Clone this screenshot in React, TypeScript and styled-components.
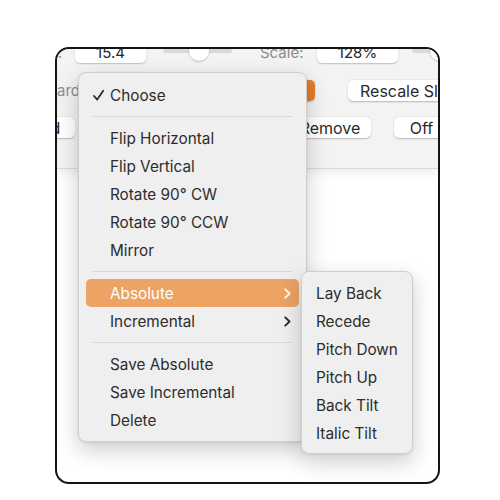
import React from "react";
import styled, { createGlobalStyle } from "styled-components";

const Global = createGlobalStyle`
  html, body { margin: 0; padding: 0; background: #ffffff; }
  body { font-family: Inter, "Noto Sans", "Liberation Sans", sans-serif; }
`;

const Page = styled.div`
  width: 500px;
  height: 500px;
  box-sizing: border-box;
  padding: 47px 0 0 55px;
  background: #ffffff;
`;

const Frame = styled.div`
  position: relative;
  width: 385px;
  height: 437px;
  box-sizing: border-box;
  border: 2px solid #141414;
  border-radius: 14px;
  overflow: hidden;
  background: #ffffff;
`;

const Toolbar = styled.div`
  display: flex;
  flex-direction: column;
  gap: 16px;
  height: 120px;
  box-sizing: border-box;
  background: #f3f3f3;
  border-bottom: 1px solid #dadada;
  box-shadow: 0 2px 12px rgba(0, 0, 0, 0.09);
  overflow: hidden;
`;

const Row = styled.div<{ $top?: number; $left: number; $h?: number }>`
  display: flex;
  align-items: center;
  height: ${(p) => p.$h ?? 21}px;
  margin-top: ${(p) => p.$top ?? 0}px;
  margin-left: ${(p) => p.$left}px;
  flex-shrink: 0;
  white-space: nowrap;
`;

const Label = styled.span<{ $w: number; $mr: number }>`
  width: ${(p) => p.$w}px;
  margin-right: ${(p) => p.$mr}px;
  flex-shrink: 0;
  text-align: right;
  font-size: 15px;
  color: #8c8c8c;
`;

const Field = styled.div<{ $w: number; $mr: number }>`
  width: ${(p) => p.$w}px;
  height: 22px;
  margin-right: ${(p) => p.$mr}px;
  flex-shrink: 0;
  box-sizing: border-box;
  background: #ffffff;
  border-radius: 5px;
  box-shadow: 0 0.5px 1.5px rgba(0, 0, 0, 0.22);
  display: flex;
  align-items: center;
  justify-content: center;
  font-size: 15px;
  color: #262626;
`;

const Slider = styled.div<{ $w: number; $mr: number; $knob: number }>`
  position: relative;
  width: ${(p) => p.$w}px;
  height: 4px;
  margin-right: ${(p) => p.$mr}px;
  margin-top: -3px;
  flex-shrink: 0;
  border-radius: 2px;
  background: #d9d9d9;
  &::after {
    content: "";
    position: absolute;
    left: ${(p) => p.$knob}px;
    top: -8px;
    width: 20px;
    height: 20px;
    border-radius: 50%;
    background: #ffffff;
    box-shadow: 0 0.5px 2px rgba(0, 0, 0, 0.3);
  }
`;

const Button = styled.div<{ $w?: number; $mr: number }>`
  ${(p) => (p.$w ? `width: ${p.$w}px;` : "padding: 0 12px;")}
  height: 21px;
  margin-right: ${(p) => p.$mr}px;
  flex-shrink: 0;
  box-sizing: border-box;
  background: #ffffff;
  border-radius: 5px;
  box-shadow: 0 0.5px 1.5px rgba(0, 0, 0, 0.25);
  display: flex;
  align-items: center;
  justify-content: center;
  font-size: 16px;
  color: #2a2a2a;
`;

const PopUp = styled.div<{ $w: number; $mr: number }>`
  width: ${(p) => p.$w}px;
  height: 21px;
  margin-right: ${(p) => p.$mr}px;
  flex-shrink: 0;
  display: flex;
  justify-content: flex-end;
  background: #ffffff;
  border-radius: 5px;
  box-shadow: 0 0.5px 1.5px rgba(0, 0, 0, 0.25);
  &::after {
    content: "";
    width: 17px;
    height: 21px;
    border-radius: 5px;
    background: #e27c2c;
  }
`;

const Menu = styled.div<{ $x: number; $y: number; $w: number }>`
  position: absolute;
  left: ${(p) => p.$x}px;
  top: ${(p) => p.$y}px;
  width: ${(p) => p.$w}px;
  box-sizing: border-box;
  display: flex;
  flex-direction: column;
  padding: 8px 0 7px;
  background: #efefef;
  border: 0.5px solid #cfcfcf;
  border-radius: 8px;
  box-shadow: 0 8px 22px rgba(0, 0, 0, 0.2), 0 1px 3px rgba(0, 0, 0, 0.08);
`;

const SubMenu = styled(Menu)`
  padding: 7px 0 6px;
`;

const Item = styled.div<{ $active?: boolean; $indent: number }>`
  height: 28px;
  margin: 0 7px;
  padding: 0 8px 0 ${(p) => p.$indent}px;
  border-radius: 5px;
  display: flex;
  align-items: center;
  font-size: 15.3px;
  color: ${(p) => (p.$active ? "#ffffff" : "#2c2c2c")};
  background: ${(p) => (p.$active ? "#eca364" : "transparent")};
  white-space: nowrap;
`;

const Check = styled.svg`
  width: 11px;
  height: 11px;
  margin-left: -17px;
  margin-right: 6px;
  flex-shrink: 0;
`;

const ItemText = styled.span`
  flex: 1;
`;

const Chevron = styled.svg`
  width: 7px;
  height: 11px;
  flex-shrink: 0;
`;

const Separator = styled.div`
  height: 1px;
  margin: 7px 14px 7px 14px;
  background: #d6d6d6;
`;

type Entry = { label: string; sub?: boolean; active?: boolean; check?: boolean } | "sep";

const mainItems: Entry[] = [
  { label: "Choose", check: true },
  "sep",
  { label: "Flip Horizontal" },
  { label: "Flip Vertical" },
  { label: "Rotate 90° CW" },
  { label: "Rotate 90° CCW" },
  { label: "Mirror" },
  "sep",
  { label: "Absolute", sub: true, active: true },
  { label: "Incremental", sub: true },
  "sep",
  { label: "Save Absolute" },
  { label: "Save Incremental" },
  { label: "Delete" },
];

const subItems = ["Lay Back", "Recede", "Pitch Down", "Pitch Up", "Back Tilt", "Italic Tilt"];

export default function App() {
  return (
    <Page>
      <Global />
      <Frame>
        <Toolbar>
          <Row $top={-8} $left={-40} $h={22}>
            <Label $w={45} $mr={13}>Size:</Label>
            <Field $w={71} $mr={17}>15.4</Field>
            <Slider $w={69} $mr={28} $knob={26} />
            <Label $w={43} $mr={14}>Scale:</Label>
            <Field $w={81} $mr={14}>128%</Field>
            <Slider $w={60} $mr={0} $knob={18} />
          </Row>
          <Row $top={1} $left={-57}>
            <Label $w={80} $mr={8}>Keyboard</Label>
            <PopUp $w={227} $mr={33} />
            <Button $mr={0}>Rescale Slider</Button>
          </Row>
          <Row $left={-42}>
            <Button $w={60} $mr={214}>Add</Button>
            <Button $w={82} $mr={23}>Remove</Button>
            <Button $w={55} $mr={0}>Off</Button>
          </Row>
        </Toolbar>

        <Menu $x={21} $y={23} $w={229}>
          {mainItems.map((it, i) =>
            it === "sep" ? (
              <Separator key={i} />
            ) : (
              <Item key={i} $active={it.active} $indent={24}>
                {it.check && (
                  <Check viewBox="0 0 11 11">
                    <path d="M1 6 L4.2 9.6 L10.2 0.8" fill="none" stroke="#2c2c2c" strokeWidth="1.8" strokeLinecap="round" strokeLinejoin="round" />
                  </Check>
                )}
                <ItemText>{it.label}</ItemText>
                {it.sub && (
                  <Chevron viewBox="0 0 7 11">
                    <path d="M1.3 1.3 L5.5 5.5 L1.3 9.7" fill="none" stroke={it.active ? "#ffffff" : "#2c2c2c"} strokeWidth="1.9" strokeLinecap="round" strokeLinejoin="round" />
                  </Chevron>
                )}
              </Item>
            )
          )}
        </Menu>

        <SubMenu $x={244} $y={222} $w={112}>
          {subItems.map((s) => (
            <Item key={s} $indent={7}>
              <ItemText>{s}</ItemText>
            </Item>
          ))}
        </SubMenu>
      </Frame>
    </Page>
  );
}
